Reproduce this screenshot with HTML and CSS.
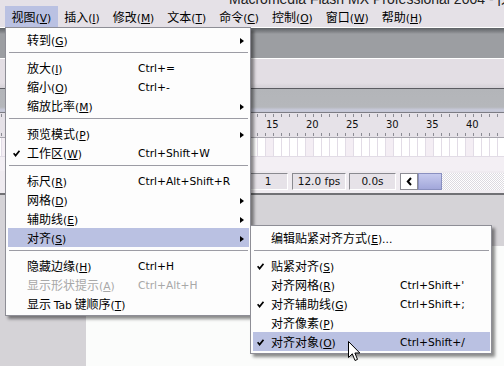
FILE: index.html
```html
<!DOCTYPE html>
<html lang="zh-CN">
<head>
<meta charset="utf-8">
<title>Flash MX 视图菜单</title>
<link rel="stylesheet" href="styles.css">
</head>
<body>
<div class="app">
  <div class="titlebar"><span>Macromedia Flash MX Professional 2004 - [未命名-1]</span></div>
  <div class="menubar">
    <span class="mb-item active">视图<span class="mn">(<u>V</u>)</span></span>
    <span class="mb-item">插入<span class="mn">(<u>I</u>)</span></span>
    <span class="mb-item">修改<span class="mn">(<u>M</u>)</span></span>
    <span class="mb-item">文本<span class="mn">(<u>T</u>)</span></span>
    <span class="mb-item">命令<span class="mn">(<u>C</u>)</span></span>
    <span class="mb-item">控制<span class="mn">(<u>O</u>)</span></span>
    <span class="mb-item">窗口<span class="mn">(<u>W</u>)</span></span>
    <span class="mb-item">帮助<span class="mn">(<u>H</u>)</span></span>
  </div>
  <div class="toolbar"></div>
  <div class="docbar"></div>
  <div class="tl-head"></div>
  <div class="ruler">
    <span>15</span><span>20</span><span>25</span><span>30</span><span>35</span><span>40</span>
  </div>
  <div class="frames"></div>
  <div class="tl-empty"></div>
  <div class="status">
    <div class="box b1">1</div>
    <div class="box b2">12.0 fps</div>
    <div class="box b3">0.0s</div>
    <div class="sbtn"><svg width="7" height="9" viewBox="0 0 7 9"><path d="M5 1 L1.8 4.5 L5 8" fill="none" stroke="#000" stroke-width="2"/></svg></div>
    <div class="thumb"></div>
    <div class="track"></div>
  </div>
  <div class="workspace"><div class="stage"></div></div>

  <div class="menu main">
    <div class="item"><span></span><span>转到<span class="mn">(<u>G</u>)</span></span><span></span><span class="arr"></span></div>
    <div class="sep"></div>
    <div class="item"><span></span><span>放大<span class="mn">(<u>I</u>)</span></span><span class="key">Ctrl+=</span><span></span></div>
    <div class="item"><span></span><span>缩小<span class="mn">(<u>O</u>)</span></span><span class="key">Ctrl+-</span><span></span></div>
    <div class="item"><span></span><span>缩放比率<span class="mn">(<u>M</u>)</span></span><span></span><span class="arr"></span></div>
    <div class="sep"></div>
    <div class="item"><span></span><span>预览模式<span class="mn">(<u>P</u>)</span></span><span></span><span class="arr"></span></div>
    <div class="item"><svg class="chk" width="7" height="7" viewBox="0 0 7 7"><path d="M0.6 3.2 L2.6 5.6 L6.5 0.8" fill="none" stroke="#000" stroke-width="1.7"/></svg><span>工作区<span class="mn">(<u>W</u>)</span></span><span class="key">Ctrl+Shift+W</span><span></span></div>
    <div class="sep"></div>
    <div class="item"><span></span><span>标尺<span class="mn">(<u>R</u>)</span></span><span class="key">Ctrl+Alt+Shift+R</span><span></span></div>
    <div class="item"><span></span><span>网格<span class="mn">(<u>D</u>)</span></span><span></span><span class="arr"></span></div>
    <div class="item"><span></span><span>辅助线<span class="mn">(<u>E</u>)</span></span><span></span><span class="arr"></span></div>
    <div class="item hl"><span></span><span>对齐<span class="mn">(<u>S</u>)</span></span><span></span><span class="arr"></span></div>
    <div class="sep"></div>
    <div class="item"><span></span><span>隐藏边缘<span class="mn">(<u>H</u>)</span></span><span class="key">Ctrl+H</span><span></span></div>
    <div class="item dis"><span></span><span>显示形状提示<span class="mn">(<u>A</u>)</span></span><span class="key">Ctrl+Alt+H</span><span></span></div>
    <div class="item"><span></span><span>显示 <span class="mn">Tab</span> 键顺序<span class="mn">(<u>T</u>)</span></span><span></span><span></span></div>
  </div>

  <div class="menu sub">
    <div class="item"><span></span><span>编辑贴紧对齐方式<span class="mn">(<u>E</u>)...</span></span><span></span></div>
    <div class="sep"></div>
    <div class="item"><svg class="chk" width="7" height="7" viewBox="0 0 7 7"><path d="M0.6 3.2 L2.6 5.6 L6.5 0.8" fill="none" stroke="#000" stroke-width="1.7"/></svg><span>贴紧对齐<span class="mn">(<u>S</u>)</span></span><span></span></div>
    <div class="item"><span></span><span>对齐网格<span class="mn">(<u>R</u>)</span></span><span class="key">Ctrl+Shift+'</span></div>
    <div class="item"><svg class="chk" width="7" height="7" viewBox="0 0 7 7"><path d="M0.6 3.2 L2.6 5.6 L6.5 0.8" fill="none" stroke="#000" stroke-width="1.7"/></svg><span>对齐辅助线<span class="mn">(<u>G</u>)</span></span><span class="key">Ctrl+Shift+;</span></div>
    <div class="item"><span></span><span>对齐像素<span class="mn">(<u>P</u>)</span></span><span></span></div>
    <div class="item hl"><svg class="chk" width="7" height="7" viewBox="0 0 7 7"><path d="M0.6 3.2 L2.6 5.6 L6.5 0.8" fill="none" stroke="#000" stroke-width="1.7"/></svg><span>对齐对象<span class="mn">(<u>O</u>)</span></span><span class="key">Ctrl+Shift+/</span></div>
  </div>

  <svg class="cursor" width="13" height="21" viewBox="0 0 13 21"><path d="M0.5 0.5 V16.5 L4.3 12.8 L7 19.5 L9.5 18.4 L6.9 12 H11.8 Z" fill="#fff" stroke="#000" stroke-width="1" stroke-linejoin="miter"/></svg>
</div>
</body>
</html>
```

FILE: styles.css
```css
* { box-sizing: border-box; margin: 0; padding: 0; }
html, body { width: 504px; height: 366px; overflow: hidden; }
body { font-family: "Noto Sans CJK SC", sans-serif; background: #d5d3d7; color: #000; }

.app { position: relative; width: 504px; height: 366px; display: flex; flex-direction: column; }

.titlebar {
  height: 6px; flex: none; overflow: hidden; background: #e5e1e7;
  padding-left: 229px; font: 14px/16px "Liberation Sans", sans-serif; color: #222; white-space: nowrap;
}
.titlebar span { display: block; margin-top: -9px; }

.menubar {
  height: 21px; flex: none; background: #e5e1e7; display: flex; padding-left: 5px;
  font-size: 12px; line-height: 21px; white-space: nowrap;
}
.mb-item { padding: 0 6.5px; }
.mb-item.active { background: #bac1e2; }

.mn, .key { font-family: "DejaVu Sans", sans-serif; font-size: 10.7px; }

.toolbar {
  height: 31px; flex: none;
  background: linear-gradient(#ffffff 0 1px, #5e6266 1px, #85878b 5px, #9c9ea2 7px, #9c9ea2 100%);
}
.docbar {
  height: 30px; flex: none;
  background: linear-gradient(#ffffff 0 1px, #e3dee4 1px, #e3dee4 25px, #d7d3d9 29px, #d7d3d9 100%);
}
.tl-head {
  height: 24px; flex: none;
  background: linear-gradient(#5c5c62 0 1px, #b3b5b9 1px, #b5b7bb 19px, #c8cadb 22px, #c2c4d2 24px);
}
.ruler {
  height: 26px; flex: none; display: flex; align-items: center; padding-left: 266px;
  border-top: 1px solid #7c7c84; border-bottom: 1px solid #a8a6ae;
  background:
    repeating-linear-gradient(90deg, #8c8c94 0 1px, transparent 1px 8px) 1px 1px / 100% 3px no-repeat,
    repeating-linear-gradient(90deg, #8c8c94 0 1px, transparent 1px 8px) 1px 20px / 100% 3px no-repeat,
    #e6e2e8;
  font: 10px/12px "DejaVu Sans", sans-serif; color: #111;
}
.ruler span { width: 40px; flex: none; }

.frames {
  height: 19px; flex: none; border-bottom: 1px solid #e2dce6;
  background:
    repeating-linear-gradient(90deg, #e2dce6 0 1px, transparent 1px 8px) 1px 0,
    repeating-linear-gradient(90deg, #f4eef4 0 8px, #ffffff 8px 40px) 25px 0;
}
.tl-empty { height: 14px; flex: none; background: #f3eff4; }

.status {
  height: 22px; flex: none; background: #efebf0; display: flex; align-items: flex-start;
  padding: 2px 0 0 248px;
  font: 10.5px/14px "DejaVu Sans", sans-serif; color: #111;
}
.box {
  height: 17px; border: 1px solid; border-color: #8a8a90 #ffffff #ffffff #8a8a90;
  background: #e6e2e8; text-align: center; flex: none;
}
.b1 { width: 40px; }
.b2 { width: 54px; margin-left: 4px; }
.b3 { width: 47px; margin-left: 3px; }
.sbtn {
  width: 18px; height: 17px; margin-left: 4px; flex: none; background: #fff;
  border: 1px solid #8c8c94; display: flex; align-items: center; justify-content: center;
}
.thumb {
  width: 24px; height: 17px; flex: none; border: 1px solid #8a90c0;
  background: linear-gradient(#c6caee, #a2a7da);
}
.track {
  flex: 1; height: 17px;
  background: repeating-conic-gradient(#dcdae0 0 25%, #ffffff 0 50%) 0 0 / 2px 2px;
}

.workspace { flex: 1; border-top: 2px solid #707074; background: #d5d3d7; padding: 51px 0 0 86px; }
.stage { height: 100%; background: #fbfcfb; }

.menu {
  position: absolute; background: #fdfdfd; border: 1px solid #8e8e96;
  box-shadow: 3px 3px 3px rgba(0, 0, 0, 0.45);
  padding: 2px 1px 2px 2px; font-size: 12px;
}
.main { left: 5px; top: 27px; width: 246px; }
.sub { left: 250px; top: 225px; width: 242px; }

.item {
  height: 19px; line-height: 19px; display: grid; align-items: center; white-space: nowrap;
  grid-template-columns: 19px 111px 1fr 13px;
}
.sub .item { grid-template-columns: 18px 129px 1fr; }
.item.hl { background: #bac1e2; }
.item.dis { color: #a8a8a8; }

.chk { display: block; margin-left: 5px; }
.sub .chk { margin-left: 4px; }

.arr {
  width: 0; height: 0; margin-left: 4px;
  border-left: 4px solid #000; border-top: 3.5px solid transparent; border-bottom: 3.5px solid transparent;
}

.sep { height: 9px; padding-top: 3px; }
.sep::before { content: ""; display: block; height: 1px; background: #9c9ca4; margin: 0 1px; }

.cursor { position: absolute; left: 348px; top: 341px; }
```
